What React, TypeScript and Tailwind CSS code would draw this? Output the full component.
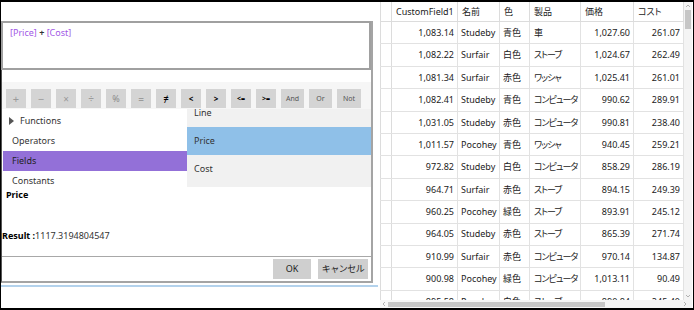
import React from "react"

const rows = [
    ["1,083.14", "Studeby", "青色", "車", "1,027.60", "261.07"],
    ["1,082.22", "Surfair", "白色", "ストーブ", "1,024.67", "262.49"],
    ["1,081.34", "Surfair", "赤色", "ワッシャ", "1,025.41", "261.01"],
    ["1,082.41", "Studeby", "青色", "コンピュータ", "990.62", "289.91"],
    ["1,031.05", "Studeby", "赤色", "コンピュータ", "990.81", "238.40"],
    ["1,011.57", "Pocohey", "青色", "ワッシャ", "940.45", "259.21"],
    ["972.82", "Studeby", "白色", "コンピュータ", "858.29", "286.19"],
    ["964.71", "Surfair", "赤色", "ストーブ", "894.15", "249.39"],
    ["960.25", "Pocohey", "緑色", "ストーブ", "893.91", "245.12"],
    ["964.05", "Studeby", "赤色", "ストーブ", "865.39", "271.74"],
    ["910.99", "Surfair", "赤色", "コンピュータ", "970.14", "134.87"],
    ["900.98", "Pocohey", "緑色", "コンピュータ", "1,013.11", "90.49"],
    ["895.58", "Pocohey", "白色", "ストーブ", "890.84", "245.40"],
]

const ops = [
    { t: "+", c: "text-[#9a9a9a] text-[11px]" },
    { t: "−", c: "text-[#9a9a9a] text-[11px]" },
    { t: "×", c: "text-[#9a9a9a] text-[10px]" },
    { t: "÷", c: "text-[#9a9a9a] text-[10px]" },
    { t: "%", c: "text-[#8a8a8a] text-[9px]" },
    { t: "=", c: "text-[#9a9a9a] text-[10px]" },
    { t: "≠", c: "text-black text-[9px] font-bold" },
    { t: "<", c: "text-black text-[8px] font-bold" },
    { t: ">", c: "text-black text-[8px] font-bold" },
    { t: "<=", c: "text-black text-[7px] font-bold" },
    { t: ">=", c: "text-black text-[7px] font-bold" },
]

const words = ["And", "Or", "Not"]

const cols = "grid grid-cols-[12px_66px_42px_30px_51px_53px_50px]"

export default function App() {
    return (
        <div className="w-[694px] h-[310px] bg-white border border-black border-t-2 border-b-2 flex overflow-hidden font-['Noto_Sans','Noto_Sans_CJK_JP',sans-serif] text-[9px] text-[#222]">
            {/* Expression dialog */}
            <div className="w-[372px] shrink-0 flex flex-col">
                <div className="h-[19px]" />
                <div className="h-[262px] flex flex-col border-r-2 border-b-2 border-[#a4a4a4] border-l border-l-[#555]">
                    {/* Formula box */}
                    <div className="h-[49px] border-2 border-[#a0a0a0] -ml-px px-[7px] pt-[3px] leading-[14px]">
                        <span className="text-[#a259e6]">[Price]</span>
                        <span className="text-[#333] font-bold"> + </span>
                        <span className="text-[#a259e6]">[Cost]</span>
                    </div>
                    <div className="h-[12px]" />

                    {/* Operator buttons */}
                    <div className="h-[27px] bg-[#f6f6f6] pt-[7px] pl-[4px] flex gap-[5px]">
                        {ops.map((o, i) => (
                            <div key={i} className={`w-[20px] h-[19px] bg-[#d4d4d4] flex items-center justify-center leading-none ${o.c}`}>
                                {o.t}
                            </div>
                        ))}
                        {words.map((w, i) => (
                            <div key={w} className={`${i === 2 ? "w-[24px]" : "w-[23px]"} h-[19px] bg-[#d4d4d4] flex items-center justify-center text-[7px] text-[#555] leading-none`}>
                                {w}
                            </div>
                        ))}
                    </div>

                    {/* Lists */}
                    <div className="h-[78px] flex">
                        <div className="w-[184px] ml-[1px] pt-[2px] shrink-0">
                            <div className="h-[20px] flex items-center pl-[6px] gap-[6px] text-[#333]">
                                <svg width="5" height="8" viewBox="0 0 5 8">
                                    <path d="M0 0 L5 4 L0 8 Z" fill="#555" />
                                </svg>
                                <span>Functions</span>
                            </div>
                            <div className="h-[20px] flex items-center pl-[9px] text-[#333]">Operators</div>
                            <div className="h-[20px] flex items-center pl-[9px] bg-[#9370d8] text-[#222]">Fields</div>
                            <div className="h-[20px] flex items-center pl-[9px] text-[#333]">Constants</div>
                        </div>
                        <div className="flex-1 bg-[#f1f1f1] overflow-hidden">
                            <div className="-mt-[10px]">
                                <div className="h-[28px] flex items-center pl-[7px] text-[#333]">Line</div>
                                <div className="h-[28px] flex items-center pl-[7px] bg-[#8fc0e8] text-[#333]">Price</div>
                                <div className="h-[28px] flex items-center pl-[7px] text-[#333]">Cost</div>
                            </div>
                        </div>
                    </div>

                    <div className="h-[15px] leading-[15px] pl-[4px] font-bold text-black">Price</div>
                    <div className="mt-[27px] h-[14px] leading-[14px] text-[#333]">
                        <span className="font-bold text-black">Result :</span>1117.3194804547
                    </div>
                    <div className="mt-[13px] border-t border-[#a8a8a8]" />
                    <div className="h-[24px] flex justify-end items-start pt-[2px] pr-[3px] gap-[7px]">
                        <div className="w-[38px] h-[20px] bg-[#cfcfcf] flex items-center justify-center text-[9px] text-[#222]">OK</div>
                        <div className="w-[50px] h-[20px] bg-[#cfcfcf] flex items-center justify-center text-[9px] text-[#222] tracking-[-0.5px]">キャンセル</div>
                    </div>
                </div>
                <div className="mt-[2px] h-[2px] w-[377px] bg-[#b3d2ec]" />
            </div>

            {/* Data grid */}
            <div className="ml-[7px] w-[312px] shrink-0 flex flex-col">
                <div className="flex-1 flex overflow-hidden">
                    <div className="w-[304px] overflow-hidden [font-feature-settings:'palt']">
                        <div className={`${cols} h-[20px] border-b border-[#dcdcdc] text-[#222]`}>
                            <div className="border-l border-r border-[#dcdcdc]" />
                            {["CustomField1", "名前", "色", "製品", "価格", "コスト"].map((h) => (
                                <div key={h} className="border-r border-[#dcdcdc] pl-[4px] flex items-center whitespace-nowrap overflow-hidden">
                                    {h}
                                </div>
                            ))}
                        </div>
                        {rows.map((r, i) => (
                            <div key={i} className={`${cols} h-[22.4px] border-b border-[#e2e2e2] text-[#222]`}>
                                <div className="border-l border-r border-[#dcdcdc]" />
                                <div className="border-r border-[#e2e2e2] pr-[3px] flex items-center justify-end">{r[0]}</div>
                                <div className="border-r border-[#e2e2e2] pl-[3px] flex items-center">{r[1]}</div>
                                <div className="border-r border-[#e2e2e2] pl-[3px] flex items-center">{r[2]}</div>
                                <div className="border-r border-[#e2e2e2] pl-[4px] flex items-center whitespace-nowrap tracking-[-1px]">{r[3]}</div>
                                <div className="border-r border-[#e2e2e2] pr-[3px] flex items-center justify-end">{r[4]}</div>
                                <div className="border-r border-[#e2e2e2] pr-[3px] flex items-center justify-end">{r[5]}</div>
                            </div>
                        ))}
                    </div>
                    {/* Vertical scrollbar */}
                    <div className="w-[8px] bg-[#f4f4f4] flex flex-col items-center">
                        <svg width="6" height="6" viewBox="0 0 6 6" className="mt-[1px]">
                            <path d="M1 4 L3 2 L5 4" stroke="#a0a0a0" strokeWidth="0.8" fill="none" />
                        </svg>
                        <div className="mt-[1px] w-[6px] h-[19px] bg-[#c6c6c6]" />
                        <div className="flex-1" />
                        <svg width="6" height="6" viewBox="0 0 6 6" className="mb-[1px]">
                            <path d="M1 2 L3 4 L5 2" stroke="#a0a0a0" strokeWidth="0.8" fill="none" />
                        </svg>
                    </div>
                </div>
                {/* Horizontal scrollbar */}
                <div className="h-[8px] bg-[#f4f4f4] flex items-center">
                    <svg width="6" height="6" viewBox="0 0 6 6" className="ml-[1px]">
                        <path d="M4 1 L2 3 L4 5" stroke="#a0a0a0" strokeWidth="0.8" fill="none" />
                    </svg>
                    <div className="ml-[1px] w-[217px] h-[5px] bg-[#c6c6c6]" />
                    <div className="flex-1" />
                    <svg width="6" height="6" viewBox="0 0 6 6" className="mr-[4px]">
                        <path d="M2 1 L4 3 L2 5" stroke="#a0a0a0" strokeWidth="0.8" fill="none" />
                    </svg>
                </div>
            </div>
        </div>
    )
}
